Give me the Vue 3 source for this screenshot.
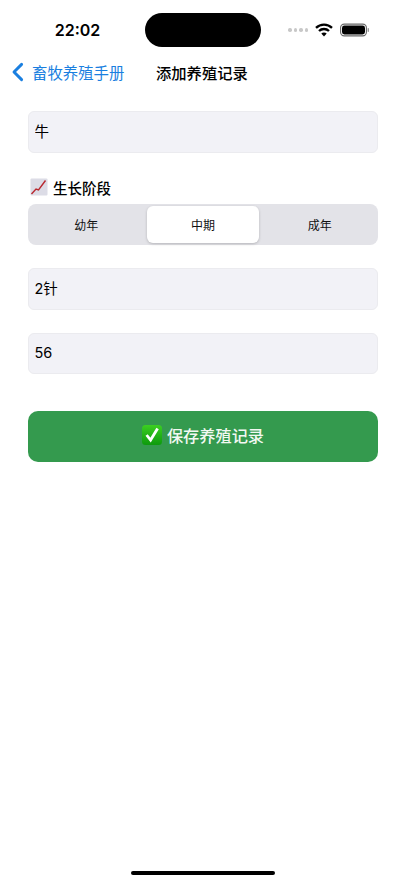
<script setup>
import { ref } from 'vue';

const stages = ['幼年', '中期', '成年'];
const stage = ref('中期');
</script>

<template>
  <div class="page">
    <div class="status">
      <div class="time">22:02</div>
      <div class="island"></div>
      <div class="status-right">
        <div class="dots"><i></i><i></i><i></i><i></i></div>
        <svg class="wifi" width="18" height="14" viewBox="0 0 18 14">
          <path d="M1 4.9 A11.4 11.4 0 0 1 17 4.9" fill="none" stroke="#000" stroke-width="2.3" />
          <path d="M4 8 A7.2 7.2 0 0 1 14 8" fill="none" stroke="#000" stroke-width="2.3" />
          <path d="M6.3 10.6 A3.6 3.6 0 0 1 11.7 10.6 L9 13.6 Z" fill="#000" />
        </svg>
        <svg class="battery" width="30" height="14" viewBox="0 0 30 14">
          <rect x="0.6" y="1.1" width="25.8" height="11.8" rx="3.6" fill="none" stroke="#666" stroke-width="1.1" />
          <rect x="2" y="2.5" width="23" height="9" rx="2.4" fill="#000" />
          <rect x="27.6" y="5" width="1.4" height="4" rx="0.7" fill="#999" />
        </svg>
      </div>
    </div>

    <div class="nav">
      <div class="back">
        <svg width="13" height="20" viewBox="0 0 13 20">
          <path d="M10.6 2.4 L3 10 L10.6 17.6" fill="none" stroke="#1a7fe0" stroke-width="2.9" stroke-linecap="round" stroke-linejoin="round" />
        </svg>
        <span>畜牧养殖手册</span>
      </div>
      <div class="title">添加养殖记录</div>
    </div>

    <form class="form" @submit.prevent>
      <input class="field" value="牛" />

      <div class="stage-group">
        <div class="label">
          <svg width="18" height="18" viewBox="0 0 18 18">
            <rect x="0.5" y="0.5" width="17" height="17" rx="1" fill="#dcdce6" />
            <path d="M1.5 16 L6 11 L8.5 12 L15.5 2.5" fill="none" stroke="#b8282f" stroke-width="1.4" />
          </svg>
          <span>生长阶段</span>
        </div>
        <div class="segments">
          <button
            v-for="s in stages"
            :key="s"
            type="button"
            class="segment"
            :class="{ active: s === stage }"
            @click="stage = s"
          >
            {{ s }}
          </button>
        </div>
      </div>

      <input class="field" value="2针" />
      <input class="field" value="56" />

      <button type="submit" class="save">
        <svg width="20" height="20" viewBox="0 0 20 20">
          <defs>
            <linearGradient id="tick" x1="0" y1="0" x2="0" y2="1">
              <stop offset="0" stop-color="#3ccf22" />
              <stop offset="1" stop-color="#0d9a0d" />
            </linearGradient>
          </defs>
          <rect width="20" height="20" rx="3.5" fill="url(#tick)" />
          <path d="M4.6 10 L8.6 15 L15.6 3.6" fill="none" stroke="#fff" stroke-width="2.8" />
        </svg>
        <span>保存养殖记录</span>
      </button>
    </form>

    <div class="home-bar"></div>
  </div>
</template>

<style scoped>
.page {
  position: relative;
  height: 883px;
  background: #fff;
  color: #000;
  font-family: "Noto Sans CJK SC", "Noto Sans", sans-serif;
  overflow: hidden;
}

.status {
  display: flex;
  align-items: center;
  height: 34px;
  padding-top: 13px;
}
.time {
  width: 155px;
  box-sizing: border-box;
  margin-right: -10px;
  text-align: center;
  font-family: Inter, sans-serif;
  font-size: 16px;
  font-weight: 600;
}
.island {
  width: 116px;
  height: 34px;
  border-radius: 17px;
  background: #000;
}
.status-right {
  display: flex;
  align-items: center;
  margin-left: 27px;
}
.dots {
  display: flex;
  gap: 2px;
  margin-right: 7px;
}
.dots i {
  width: 3.5px;
  height: 3.5px;
  border-radius: 50%;
  background: #c8c8c8;
}
.wifi {
  margin-right: 7px;
}

.nav {
  display: flex;
  align-items: center;
  height: 26px;
  margin-top: 12px;
  padding-left: 11px;
}
.back {
  display: flex;
  align-items: center;
  gap: 8px;
  width: 145px;
  color: #1a7fe0;
  font-size: 15.4px;
}
.title {
  font-size: 15.3px;
  font-weight: 500;
}

.form {
  display: flex;
  flex-direction: column;
  gap: 23px;
  padding: 26px 28px 0;
}
.field {
  display: block;
  box-sizing: border-box;
  width: 100%;
  height: 41.7px;
  padding: 0 5.5px 2px;
  border: 1px solid #ebebef;
  border-radius: 6px;
  background: #f2f2f7;
  color: #000;
  font-family: Inter, "Noto Sans CJK SC", sans-serif;
  font-size: 14.5px;
  outline: none;
}

.stage-group {
  margin-top: 0.5px;
}
.label {
  display: flex;
  align-items: center;
  gap: 5px;
  height: 22px;
  margin-bottom: 5.8px;
  padding-left: 2px;
  font-size: 14.5px;
  font-weight: 500;
}
.segments {
  display: flex;
  height: 41px;
  padding: 2px 0;
  box-sizing: border-box;
  border-radius: 8px;
  background: #e3e3e8;
}
.segment {
  flex: 1;
  margin: 0 2.5px;
  padding: 0;
  border: none;
  border-radius: 6px;
  background: transparent;
  color: #111;
  font-family: inherit;
  font-size: 12px;
}
.segment.active {
  background: #fff;
  box-shadow: 0 1px 3px rgba(0, 0, 0, 0.2);
}

.save {
  display: flex;
  align-items: center;
  justify-content: center;
  gap: 5px;
  height: 50.7px;
  margin-top: 13.6px;
  padding: 0 0 2px;
  border: none;
  border-radius: 10px;
  background: #349a4e;
  color: #f2f8f2;
  font-family: inherit;
  font-size: 16.2px;
  font-weight: 500;
}

.home-bar {
  position: absolute;
  left: 131px;
  bottom: 8px;
  width: 144px;
  height: 4px;
  border-radius: 2px;
  background: #000;
}
</style>
